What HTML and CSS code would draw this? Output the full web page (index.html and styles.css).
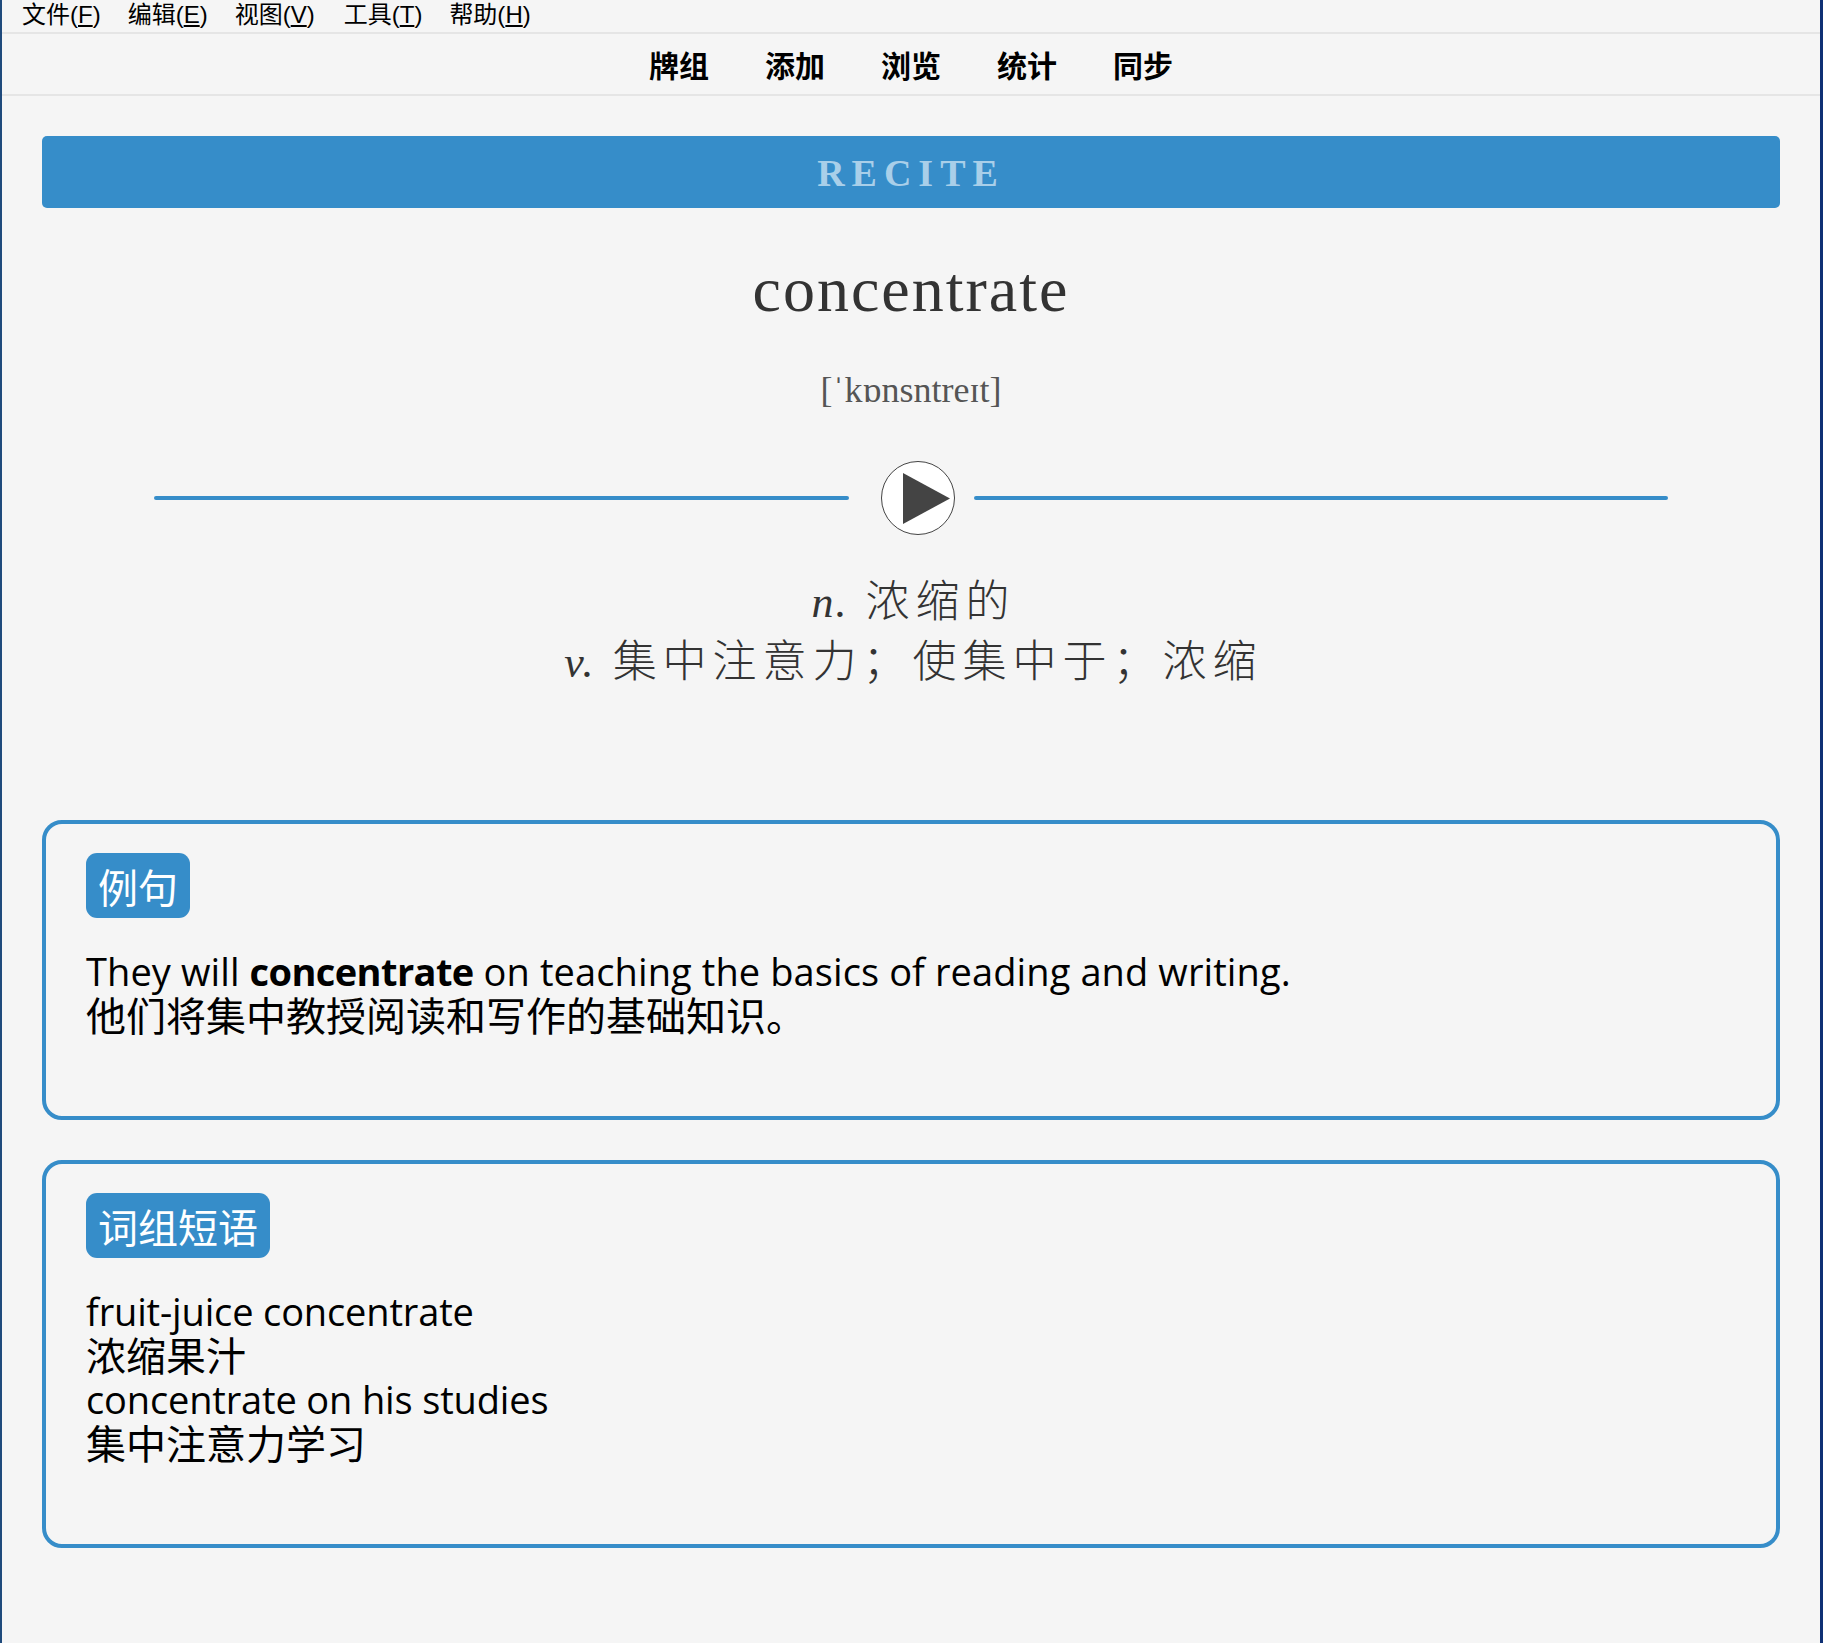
FILE: index.html
```html
<!DOCTYPE html>
<html lang="zh-CN">
<head>
<meta charset="utf-8">
<title>Recite</title>
<link rel="stylesheet" href="styles.css">
</head>
<body>
<div class="window">
  <nav class="menubar">
    <span class="menu-item">文件(<u>F</u>)</span>
    <span class="menu-item">编辑(<u>E</u>)</span>
    <span class="menu-item menu-item-wide">视图(<u>V</u>)</span>
    <span class="menu-item">工具(<u>T</u>)</span>
    <span class="menu-item">帮助(<u>H</u>)</span>
  </nav>
  <nav class="toolbar">
    <span class="tool">牌组</span>
    <span class="tool">添加</span>
    <span class="tool">浏览</span>
    <span class="tool">统计</span>
    <span class="tool">同步</span>
  </nav>
  <main class="content">
    <header class="banner">RECITE</header>
    <h1 class="word">concentrate</h1>
    <p class="phonetic">[ˈkɒnsntreɪt]</p>
    <div class="audio-row">
      <span class="rule"></span>
      <button class="play" type="button" aria-label="播放">
        <svg class="play-icon" viewBox="0 0 47 51"><polygon points="0,0 47,25.5 0,51"/></svg>
      </button>
      <span class="rule"></span>
    </div>
    <div class="definition">
      <div><i class="pos">n.</i> 浓缩的</div>
      <div><i class="pos">v.</i> 集中注意力；使集中于；浓缩</div>
    </div>
    <section class="card">
      <div class="tag">例句</div>
      <div class="lines">
        <div class="en en-sentence">They will <b>concentrate</b> on teaching the basics of reading and writing.</div>
        <div class="zh">他们将集中教授阅读和写作的基础知识。</div>
      </div>
    </section>
    <section class="card">
      <div class="tag">词组短语</div>
      <div class="lines">
        <div class="en en-phrase">fruit-juice concentrate</div>
        <div class="zh">浓缩果汁</div>
        <div class="en en-phrase">concentrate on his studies</div>
        <div class="zh">集中注意力学习</div>
      </div>
    </section>
  </main>
</div>
</body>
</html>
```
FILE: styles.css
```css
* { box-sizing: border-box; }
html, body { margin: 0; padding: 0; height: 100%; }
body {
  background: #f5f5f5;
  color: #000;
  font-family: "Noto Sans CJK SC", "Noto Sans", sans-serif;
}
.window {
  min-height: 1643px;
  border-left: 2px solid #1f4a7c;
  border-right: 3px solid #0f3074;
}
.menubar {
  display: flex;
  gap: 27px;
  height: 34px;
  padding-left: 20px;
  border-bottom: 2px solid #e5e5e5;
  font-family: "Liberation Sans", "Noto Sans CJK SC", sans-serif;
  font-size: 24px;
  line-height: 30px;
}
.menu-item u { text-underline-offset: 2px; }
.menu-item-wide { padding-right: 2px; }
.toolbar {
  display: flex;
  justify-content: center;
  gap: 56px;
  height: 62px;
  border-bottom: 2px solid #e5e5e5;
  font-size: 30px;
  font-weight: 700;
  line-height: 60px;
}
.content { padding: 40px 40px 0; }
.banner {
  height: 72px;
  border-radius: 5px;
  background: #368dc9;
  color: #a9cfe9;
  font-family: "Liberation Serif", serif;
  font-size: 38px;
  font-weight: 700;
  letter-spacing: 7px;
  line-height: 74px;
  text-align: center;
}
.word {
  margin: 42px 0 0;
  color: #333;
  font-family: "Liberation Serif", serif;
  font-size: 64px;
  font-weight: 400;
  letter-spacing: 2px;
  line-height: 80px;
  text-align: center;
}
.phonetic {
  margin: 38px 0 0;
  color: #555;
  font-family: "Liberation Serif", "DejaVu Serif", serif;
  font-size: 36px;
  line-height: 44px;
  text-align: center;
}
.audio-row {
  display: flex;
  align-items: center;
  width: 1514px;
  margin: 49px auto 0;
}
.rule {
  flex: 1;
  height: 4px;
  border-radius: 2px;
  background: #368dc9;
}
.play {
  display: flex;
  align-items: center;
  justify-content: center;
  width: 74px;
  height: 74px;
  margin: 0 19px 0 32px;
  padding: 0 0 0 18px;
  border: 1.5px solid #444;
  border-radius: 50%;
  background: #fff;
}
.play-icon { flex: none; width: 47px; height: 51px; fill: #444; }
.definition {
  margin-top: 38px;
  padding-left: 5px;
  color: #333;
  font-family: "Liberation Serif", "Noto Sans CJK SC", serif;
  font-size: 44px;
  font-weight: 300;
  letter-spacing: 6px;
  line-height: 60px;
  text-align: center;
}
.pos { font-style: italic; letter-spacing: 2px; }
.card {
  height: 300px;
  margin-top: 40px;
  padding: 29px 40px 0;
  border: 4px solid #368dc9;
  border-radius: 20px;
}
.definition + .card { margin-top: 127px; }
.card + .card { height: 388px; }
.tag {
  display: inline-block;
  height: 65px;
  padding: 0 12px;
  border-radius: 11px;
  background: #368dc9;
  color: #fff;
  font-size: 40px;
  line-height: 67px;
  vertical-align: top;
}
.lines {
  margin-top: 31px;
  font-size: 40px;
  line-height: 44px;
}
.en { font-family: "Open Sans", "Noto Sans CJK SC", sans-serif; font-size: 38px; }
.en-sentence { letter-spacing: 0.1px; }
.en-sentence b { letter-spacing: -0.6px; }
.en-phrase { letter-spacing: -0.15px; }
.zh { position: relative; top: -1px; }
```
